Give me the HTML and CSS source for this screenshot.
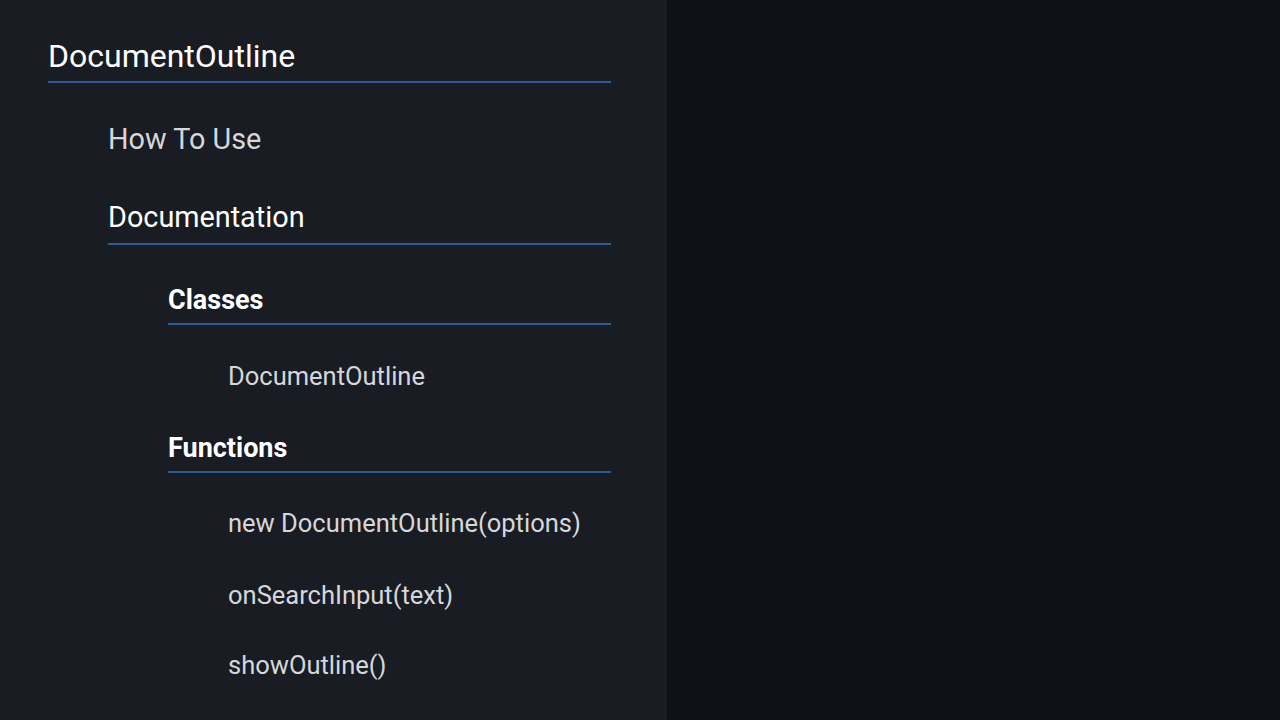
FILE: index.html
```html
<!DOCTYPE html>
<html lang="en">
<head>
<meta charset="utf-8">
<title>DocumentOutline</title>
<link rel="stylesheet" href="styles.css">
</head>
<body>
<div class="app">
  <nav class="outline">
    <div class="item lvl0 underlined">DocumentOutline</div>
    <div class="group">
      <div class="item lvl1 first">How To Use</div>
      <div class="item lvl1 underlined">Documentation</div>
      <div class="group">
        <div class="item lvl2 underlined">Classes</div>
        <div class="group">
          <div class="item lvl3 first-a">DocumentOutline</div>
        </div>
        <div class="item lvl2 underlined fn">Functions</div>
        <div class="group">
          <div class="item lvl3 first-b">new DocumentOutline(options)</div>
          <div class="item lvl3 second">onSearchInput(text)</div>
          <div class="item lvl3">showOutline()</div>
        </div>
      </div>
    </div>
  </nav>
  <main class="content"></main>
</div>
</body>
</html>
```
FILE: styles.css
```css
* { box-sizing: border-box; }
html, body { margin: 0; padding: 0; height: 100%; }
body {
  font-family: Roboto, "Noto Sans", "Liberation Sans", sans-serif;
  background: #0e1117;
  overflow: hidden;
}
.app {
  display: flex;
  height: 720px;
}
.outline {
  width: 667px;
  flex: none;
  background: #1a1c23;
  padding: 38px 56px 0 48px;
}
.content {
  flex: 1;
  background: #0e1117;
}
.group {
  padding-left: 60px;
}
.item {
  white-space: nowrap;
}
.underlined {
  border-bottom: 2px solid #2b5b8f;
}
.lvl0 {
  font-size: 32px;
  line-height: 36px;
  color: #ffffff;
  padding-bottom: 7px;
}
.lvl1 {
  font-size: 28.8px;
  line-height: 32px;
  color: #ffffff;
  margin-top: 46px;
}
.lvl1.first {
  margin-top: 40px;
  color: #d6d7da;
}
.lvl1.underlined {
  padding-bottom: 10px;
}
.lvl2 {
  font-size: 27px;
  line-height: 30px;
  font-weight: 700;
  color: #ffffff;
  margin-top: 40px;
  padding-bottom: 8px;
}
.lvl2.fn {
  margin-top: 42px;
  padding-bottom: 8px;
}
.lvl3 {
  font-size: 25.5px;
  line-height: 30px;
  color: #d6d7da;
  margin-top: 40px;
}
.lvl3.first-a { margin-top: 36px; }
.lvl3.first-b { margin-top: 35px; }
.lvl3.second { margin-top: 42px; }
```
